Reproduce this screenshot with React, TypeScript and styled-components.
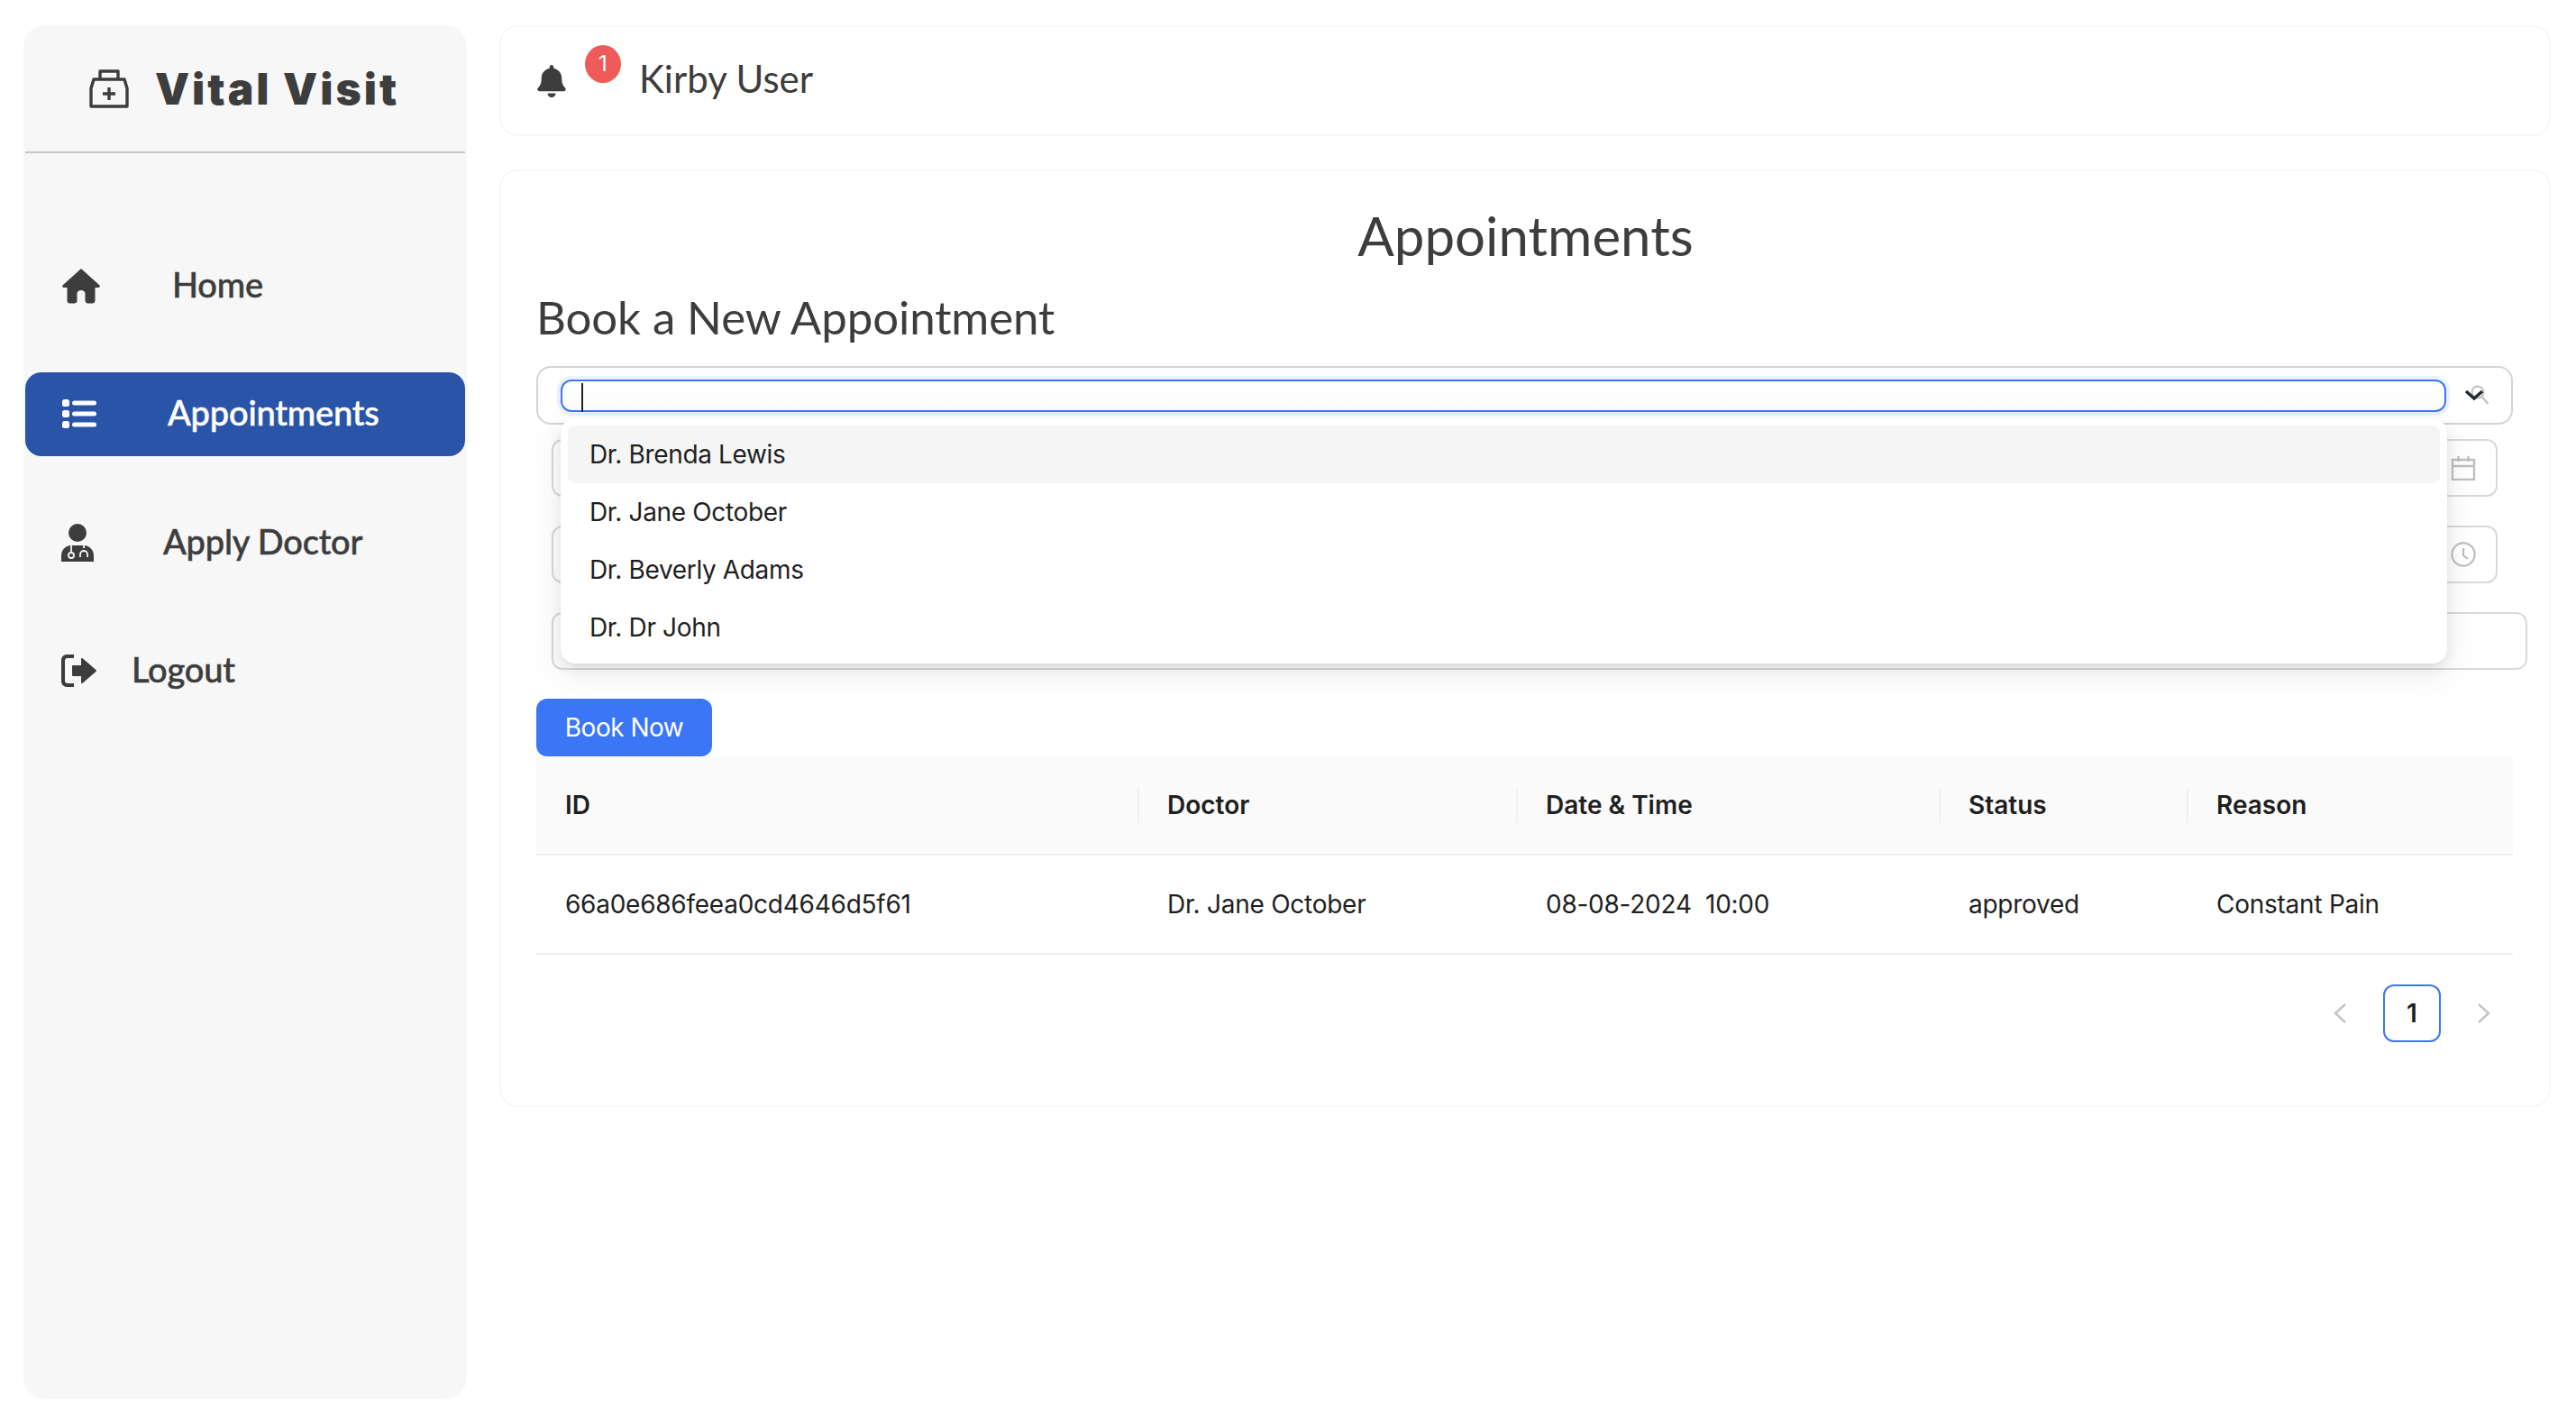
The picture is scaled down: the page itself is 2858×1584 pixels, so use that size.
import React from 'react';
import styled, { createGlobalStyle } from 'styled-components';
import { FaBell } from 'react-icons/fa';

const GlobalStyle = createGlobalStyle`
  html, body {
    margin: 0;
    padding: 0;
    background: #fff;
    font-family: Lato, 'Open Sans', sans-serif;
    color: #3d3d3d;
  }
  * {
    box-sizing: border-box;
  }
`;

const doctors = ['Dr. Brenda Lewis', 'Dr. Jane October', 'Dr. Beverly Adams', 'Dr. Dr John'];

const columns = [
  { label: 'ID', value: '66a0e686feea0cd4646d5f61', width: 668 },
  { label: 'Doctor', value: 'Dr. Jane October', width: 420 },
  { label: 'Date & Time', value: '08-08-2024  10:00', width: 469 },
  { label: 'Status', value: 'approved', width: 275 },
  { label: 'Reason', value: 'Constant Pain', width: 361 },
];

const LogoIcon = () => (
  <svg width="48" height="48" viewBox="0 0 48 48" fill="none" stroke="#3d3d3d" strokeWidth="3.4" strokeLinejoin="round">
    <path d="M4 44V24l3-10h34l3 10v20z" />
    <path d="M14 14V5h20v9" />
    <path d="M24 23v14M17 30h14" />
  </svg>
);

const HomeIcon = () => (
  <svg width="44" height="40" viewBox="0 0 44 40" fill="#3d3d3d">
    <path d="M22 1l20 18c1.500 1.400.8 3-1 3h-3.500v14.500c0 1.700-1.200 3-3 3h-5c-1.700 0-3-1.300-3-3V29c0-2.500-1.800-4-4.500-4s-4.500 1.500-4.500 4v7.500c0 1.700-1.300 3-3 3h-5c-1.800 0-3-1.300-3-3V22H3c-1.800 0-2.500-1.600-1-3z" />
  </svg>
);

const ListIcon = () => (
  <svg width="40" height="34" viewBox="0 0 40 34" fill="#fff">
    <rect x="1" y="1" width="8" height="8" rx="2.5" />
    <rect x="1" y="13" width="8" height="8" rx="2.5" />
    <rect x="1" y="25" width="8" height="8" rx="2.5" />
    <rect x="12" y="2.5" width="27" height="5" rx="2.5" />
    <rect x="12" y="14.5" width="27" height="5" rx="2.5" />
    <rect x="12" y="26.5" width="27" height="5" rx="2.5" />
  </svg>
);

const DoctorIcon = () => (
  <svg width="36" height="42" viewBox="0 0 36 42">
    <circle cx="18" cy="10" r="10" fill="#3d3d3d" />
    <path d="M0 42v-6c0-7 4-11 10-12h16c6 1 10 5 10 12v6z" fill="#3d3d3d" />
    <g fill="none" stroke="#f7f7f7" strokeWidth="1.800">
      <path d="M11 24v7M25 24v3" />
      <circle cx="11" cy="35" r="3" />
      <path d="M21 37v-3a4 4 0 0 1 8 0v3" />
    </g>
  </svg>
);

const LogoutIcon = () => (
  <svg width="40" height="36" viewBox="0 0 40 36" fill="#3d3d3d">
    <path d="M14 0H6a6 6 0 0 0-6 6v24a6 6 0 0 0 6 6h8v-4H7a3 3 0 0 1-3-3V7a3 3 0 0 1 3-3h7z" />
    <path d="M13 13h10V5l15 13-15 13v-8H13z" strokeLinejoin="round" stroke="#3d3d3d" strokeWidth="2" />
  </svg>
);

const CalendarIcon = () => (
  <svg width="28" height="28" viewBox="0 0 28 28" fill="none" stroke="#bfbfbf" strokeWidth="2.4">
    <path d="M2 5h24v22H2zM2 12h24M8.500 1v6M19.500 1v6" />
  </svg>
);

const ClockIcon = () => (
  <svg width="28" height="28" viewBox="0 0 28 28" fill="none" stroke="#bfbfbf" strokeWidth="2.2">
    <circle cx="14" cy="14" r="12.600" />
    <path d="M14 7v8l5 4" />
  </svg>
);

const SelectArrows = () => (
  <svg width="30" height="24" viewBox="0 0 30 24" fill="none">
    <circle cx="15" cy="8" r="6.500" stroke="#bfbfbf" strokeWidth="2" />
    <path d="M19.500 13l7 8" stroke="#bfbfbf" strokeWidth="2" />
    <path d="M2 7l9 8 9-8" stroke="#23272b" strokeWidth="3.400" />
  </svg>
);

const ChevronLeft = () => (
  <svg width="16" height="24" viewBox="0 0 16 24" fill="none" stroke="#c4c4c4" strokeWidth="2.400">
    <path d="M14 2L3 12l11 10" />
  </svg>
);

const ChevronRight = () => (
  <svg width="16" height="24" viewBox="0 0 16 24" fill="none" stroke="#c4c4c4" strokeWidth="2.400">
    <path d="M2 2l11 10L2 22" />
  </svg>
);

const App = () => {
  return (
    <Page>
      <GlobalStyle />
      <Sidebar>
        <Brand>
          <LogoIcon />
          <BrandName>Vital Visit</BrandName>
        </Brand>
        <Nav>
          <NavItem>
            <NavIcon><HomeIcon /></NavIcon>
            <NavLabel $left={191}>Home</NavLabel>
          </NavItem>
          <NavItem $active>
            <NavIcon><ListIcon /></NavIcon>
            <NavLabel $left={186}>Appointments</NavLabel>
          </NavItem>
          <NavItem>
            <NavIcon><DoctorIcon /></NavIcon>
            <NavLabel $left={181}>Apply Doctor</NavLabel>
          </NavItem>
          <NavItem>
            <NavIcon><LogoutIcon /></NavIcon>
            <NavLabel $left={146}>Logout</NavLabel>
          </NavItem>
        </Nav>
      </Sidebar>

      <Content>
        <TopBar>
          <BellWrap>
            <FaBell size={36} color="#3d3d3d" />
            <Badge>1</Badge>
          </BellWrap>
          <UserName>Kirby User</UserName>
        </TopBar>

        <MainCard>
          <PageTitle>Appointments</PageTitle>
          <SectionTitle>Book a New Appointment</SectionTitle>

          <SelectBox>
            <SelectInput>
              <Caret />
            </SelectInput>
            <SelectArrows />
            <Dropdown>
              {doctors.map((doctor, i) => (
                <Option key={doctor} $active={i === 0}>{doctor}</Option>
              ))}
            </Dropdown>
          </SelectBox>

          <FieldStack>
            <Field>
              <CalendarIcon />
            </Field>
            <Field>
              <ClockIcon />
            </Field>
            <ReasonField />
          </FieldStack>

          <BookButton>Book Now</BookButton>

          <Table>
            <thead>
              <tr>
                {columns.map((col, i) => (
                  <HeadCell key={col.label} $width={col.width} $first={i === 0}>{col.label}</HeadCell>
                ))}
              </tr>
            </thead>
            <tbody>
              <tr>
                {columns.map((col) => (
                  <BodyCell key={col.label}>{col.value}</BodyCell>
                ))}
              </tr>
            </tbody>
          </Table>

          <Pagination>
            <ChevronLeft />
            <PageButton>1</PageButton>
            <ChevronRight />
          </Pagination>
        </MainCard>
      </Content>
    </Page>
  );
};

export default App;

const Page = styled.div`
  display: flex;
  align-items: flex-start;
  gap: 36px;
  width: 2858px;
  height: 1584px;
  padding: 28px 28px 0 26px;
  overflow: hidden;
`;

const Sidebar = styled.aside`
  flex: 0 0 492px;
  height: 1524px;
  padding: 0 2px;
  background: #f7f7f7;
  border-radius: 24px;
`;

const Brand = styled.div`
  display: flex;
  align-items: center;
  justify-content: center;
  gap: 27px;
  height: 142px;
  padding-right: 4px;
  border-bottom: 2px solid #c6c6c6;
`;

const BrandName = styled.div`
  font-family: Inter, sans-serif;
  font-size: 48px;
  font-weight: 900;
  letter-spacing: 3px;
  color: #3d3d3d;
`;

const Nav = styled.nav`
  display: flex;
  flex-direction: column;
  gap: 49.5px;
  margin-top: 100px;
`;

const NavItem = styled.div<{ $active?: boolean }>`
  display: flex;
  align-items: center;
  height: 93px;
  border-radius: 18px;
  background: ${(p) => (p.$active ? '#2a54a8' : 'transparent')};
  color: ${(p) => (p.$active ? '#fff' : '#3d3d3d')};
`;

const NavIcon = styled.span`
  display: flex;
  align-items: center;
  width: 118px;
  padding-left: 40px;
`;

const NavLabel = styled.span<{ $left: number }>`
  margin-left: ${(p) => p.$left - 146}px;
  padding-bottom: 4px;
  font-size: 38px;
  font-weight: 500;
  letter-spacing: -0.2px;
  -webkit-text-stroke: 0.5px currentColor;
`;

const Content = styled.div`
  flex: 0 0 2276px;
  min-width: 0;
  display: flex;
  flex-direction: column;
  gap: 37px;
`;

const TopBar = styled.header`
  display: flex;
  align-items: center;
  height: 123px;
  padding-left: 38px;
  border: 2px solid #f7f7f7;
  border-radius: 20px;
`;

const BellWrap = styled.div`
  position: relative;
  display: flex;
  width: 115px;
`;

const Badge = styled.span`
  position: absolute;
  top: -22px;
  left: 55px;
  display: flex;
  align-items: center;
  justify-content: center;
  width: 40px;
  height: 42px;
  border-radius: 50%;
  background: #ef5b58;
  color: #fff;
  font-family: Inter, sans-serif;
  font-size: 24px;
`;

const UserName = styled.div`
  padding-bottom: 6px;
  font-size: 42px;
  color: #3d3d3d;
`;

const MainCard = styled.main`
  height: 1040px;
  padding: 35px 38px 0 39px;
  border: 2px solid #f7f7f7;
  border-radius: 20px;
`;

const PageTitle = styled.h1`
  margin: 0;
  text-align: center;
  font-size: 60px;
  font-weight: 400;
  line-height: 72px;
`;

const SectionTitle = styled.h2`
  margin: 25px 0 0;
  font-size: 51px;
  font-weight: 400;
  line-height: 60px;
  letter-spacing: -0.1px;
`;

const SelectBox = styled.div`
  position: relative;
  display: flex;
  align-items: center;
  gap: 20px;
  width: 2193px;
  height: 65px;
  margin-top: 24px;
  padding-left: 25px;
  border: 2px solid #d0d5d9;
  border-radius: 16px;
`;

const SelectInput = styled.div`
  display: flex;
  align-items: center;
  width: 2092px;
  height: 36px;
  padding-left: 21px;
  border: 2px solid #3b76f6;
  border-radius: 12px;
  box-shadow: 0 0 0 4px rgba(59, 118, 246, 0.1);
  background: linear-gradient(#fff, #fcfcfc);
`;

const Caret = styled.span`
  width: 2px;
  height: 32px;
  margin-top: 4px;
  background: #222;
`;

const Dropdown = styled.div`
  position: absolute;
  top: 56px;
  left: 25px;
  z-index: 2;
  width: 2093px;
  height: 272px;
  padding: 8px;
  background: #fff;
  border-radius: 16px;
  box-shadow: 0 12px 32px 8px rgba(0, 0, 0, 0.05), 0 6px 16px 0 rgba(0, 0, 0, 0.08), 0 3px 6px -4px rgba(0, 0, 0, 0.12);
`;

const Option = styled.div<{ $active?: boolean }>`
  display: flex;
  align-items: center;
  height: 64px;
  padding-left: 24px;
  border-radius: 8px;
  background: ${(p) => (p.$active ? '#f5f5f5' : 'transparent')};
  font-family: Inter, sans-serif;
  font-size: 28px;
  letter-spacing: -0.35px;
  color: #1f1f1f;
`;

const FieldStack = styled.div`
  display: flex;
  flex-direction: column;
  gap: 32px;
  margin: 16px 0 0 17px;
`;

const Field = styled.div`
  display: flex;
  align-items: center;
  justify-content: flex-end;
  width: 2159px;
  height: 64px;
  padding-right: 22px;
  border: 2px solid #d9d9d9;
  border-radius: 12px;
`;

const ReasonField = styled.div`
  width: 2192px;
  height: 64px;
  border: 2px solid #d9d9d9;
  border-radius: 12px;
`;

const BookButton = styled.button`
  display: block;
  width: 195px;
  height: 64px;
  margin-top: 32px;
  padding: 0;
  border: none;
  border-radius: 12px;
  background: #3b76f6;
  color: #fff;
  font-family: Inter, sans-serif;
  font-size: 28px;
  letter-spacing: -0.5px;
`;

const Table = styled.table`
  width: 2193px;
  border-collapse: collapse;
  table-layout: fixed;
  font-family: Inter, sans-serif;
  font-size: 28px;
  letter-spacing: -0.25px;
  color: #1f1f1f;
`;

const HeadCell = styled.th<{ $width: number; $first?: boolean }>`
  position: relative;
  width: ${(p) => p.$width}px;
  height: 109px;
  padding: 0 32px;
  background: #fafafa;
  border-bottom: 2px solid #f0f0f0;
  text-align: left;
  font-weight: 600;
  letter-spacing: 0;
  &::before {
    content: '';
    display: ${(p) => (p.$first ? 'none' : 'block')};
    position: absolute;
    left: -1px;
    top: 36px;
    width: 2px;
    height: 38px;
    background: #f0f0f0;
  }
`;

const BodyCell = styled.td`
  height: 110px;
  padding: 0 32px;
  border-bottom: 2px solid #f0f0f0;
  white-space: pre;
`;

const Pagination = styled.div`
  display: flex;
  align-items: center;
  justify-content: flex-end;
  gap: 40px;
  width: 2193px;
  margin-top: 33px;
  padding-right: 24px;
`;

const PageButton = styled.div`
  display: flex;
  align-items: center;
  justify-content: center;
  width: 64px;
  height: 64px;
  border: 2px solid #3b76f6;
  border-radius: 12px;
  font-family: Inter, sans-serif;
  font-size: 28px;
  font-weight: 600;
  color: #1f1f1f;
`;
